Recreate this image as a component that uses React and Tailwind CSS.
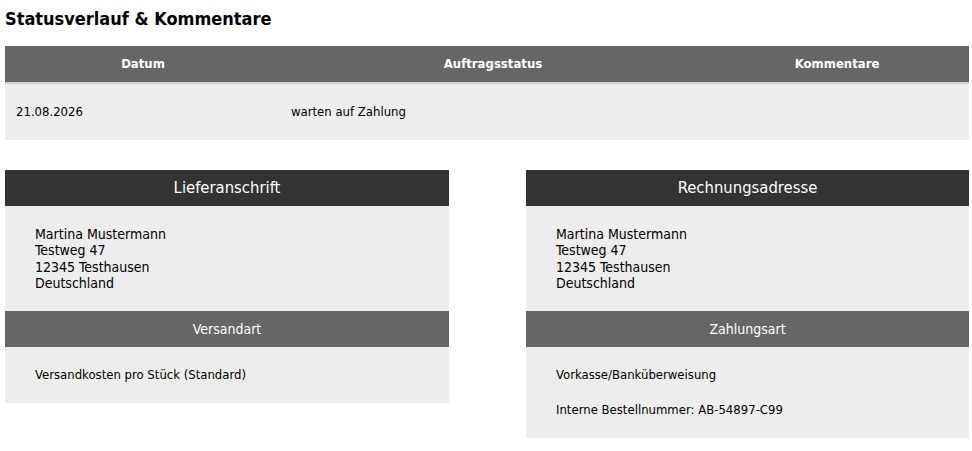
export default function App() {
  const font = { fontFamily: "'DejaVu Sans Condensed', 'DejaVu Sans', sans-serif" };

  const Box = ({ title, subtitle, address, lines, width }) => (
    <div className={`${width} flex flex-col self-start`}>
      <div className="h-[36px] bg-[#333333] text-white text-[16.5px] flex items-center justify-center">
        {title}
      </div>
      <div className="bg-[#ededed] px-[30px] pt-[20px] pb-[20px] text-[14px] leading-[16.3px] text-black">
        {address.map((l) => (
          <div key={l}>{l}</div>
        ))}
      </div>
      <div className="h-[36px] bg-[#666666] text-white text-[14px] flex items-center justify-center">
        {subtitle}
      </div>
      <div className="bg-[#ededed] px-[30px] py-[20px] text-[13px] leading-[16px] text-black flex flex-col gap-[19px]">
        {lines.map((l) => (
          <div key={l}>{l}</div>
        ))}
      </div>
    </div>
  );

  const address = ["Martina Mustermann", "Testweg 47", "12345 Testhausen", "Deutschland"];

  return (
    <div className="bg-white w-[972px] h-[451px] text-black" style={font}>
      <div className="ml-[5px] w-[964px]">
        <h2 className="pt-[9px] h-[46px] text-[18px] font-bold leading-[20px]">
          Statusverlauf &amp; Kommentare
        </h2>
        <div className="flex flex-col">
          <div className="h-[36px] bg-[#666666] text-white text-[13px] font-bold flex items-center">
            <div className="w-[276px] text-center">Datum</div>
            <div className="w-[424px] text-center">Auftragsstatus</div>
            <div className="flex-1 text-center">Kommentare</div>
          </div>
          <div className="h-[2px] bg-[#d2d2d2]" />
          <div className="h-[56px] bg-[#ededed] text-[13px] flex items-center">
            <div className="w-[276px] pl-[11px]">21.08.2026</div>
            <div className="w-[424px] pl-[10px]">warten auf Zahlung</div>
            <div className="flex-1" />
          </div>
        </div>
        <div className="mt-[30px] flex justify-between">
          <Box
            width="w-[444px]"
            title="Lieferanschrift"
            subtitle="Versandart"
            address={address}
            lines={["Versandkosten pro Stück (Standard)"]}
          />
          <Box
            width="w-[443px]"
            title="Rechnungsadresse"
            subtitle="Zahlungsart"
            address={address}
            lines={["Vorkasse/Banküberweisung", "Interne Bestellnummer: AB-54897-C99"]}
          />
        </div>
      </div>
    </div>
  );
}
